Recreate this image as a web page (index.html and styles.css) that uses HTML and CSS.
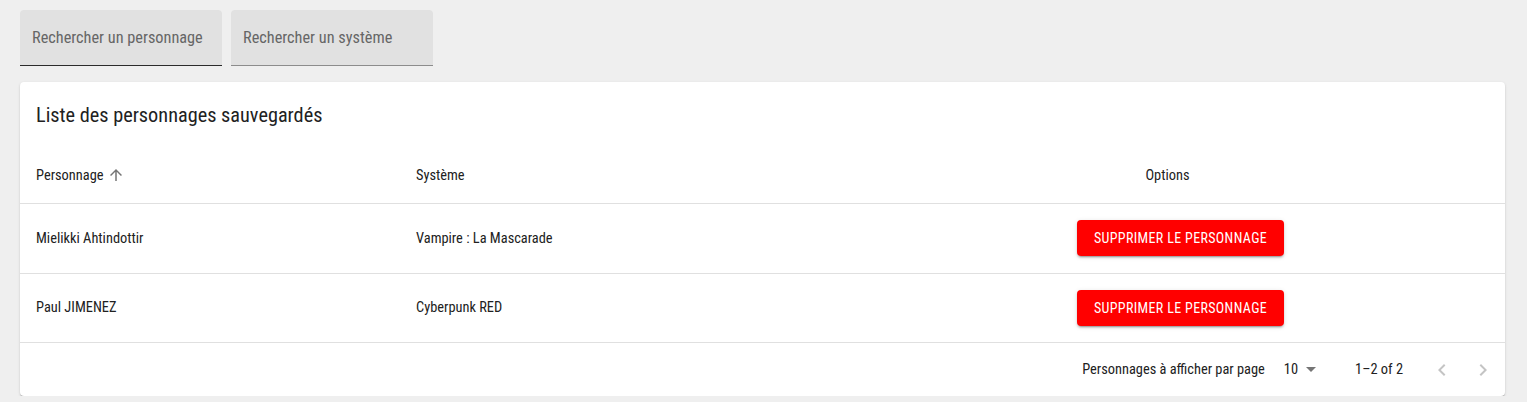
FILE: index.html
```html
<!DOCTYPE html>
<html lang="fr">
<head>
<meta charset="utf-8">
<title>Personnages</title>
<link rel="stylesheet" href="styles.css">
</head>
<body>
  <div class="search-bar">
    <div class="field field-active"><span class="placeholder">Rechercher un personnage</span></div>
    <div class="field"><span class="placeholder">Rechercher un système</span></div>
  </div>

  <div class="card">
    <div class="card-title">Liste des personnages sauvegardés</div>
    <div class="table">
      <div class="row header">
        <div class="cell">Personnage
          <svg class="sort" width="18" height="18" viewBox="0 0 24 24"><path d="M4 12l1.41 1.41L11 7.83V20h2V7.83l5.58 5.59L20 12l-8-8-8 8z" fill="#757575"/></svg>
        </div>
        <div class="cell">Système</div>
        <div class="cell center">Options</div>
      </div>
      <div class="row">
        <div class="cell">Mielikki Ahtindottir</div>
        <div class="cell">Vampire : La Mascarade</div>
        <div class="cell action"><button class="btn-danger">Supprimer le personnage</button></div>
      </div>
      <div class="row">
        <div class="cell">Paul JIMENEZ</div>
        <div class="cell">Cyberpunk RED</div>
        <div class="cell action"><button class="btn-danger">Supprimer le personnage</button></div>
      </div>
    </div>
    <div class="paginator">
      <span class="pg-label">Personnages à afficher par page</span>
      <span class="pg-select">10
        <svg width="10" height="5" viewBox="0 0 10 5"><path d="M0 0l5 5 5-5z" fill="#757575"/></svg>
      </span>
      <span class="pg-range">1–2 of 2</span>
      <span class="pg-nav">
        <svg width="24" height="24" viewBox="0 0 24 24"><path d="M15.41 7.41L14 6l-6 6 6 6 1.41-1.41L10.83 12z" fill="#c4c4c4"/></svg>
        <svg width="24" height="24" viewBox="0 0 24 24"><path d="M10 6L8.59 7.41 13.17 12l-4.58 4.59L10 18l6-6z" fill="#c4c4c4"/></svg>
      </span>
    </div>
  </div>
</body>
</html>
```

FILE: styles.css
```css
* { box-sizing: border-box; }
body {
  margin: 0;
  padding: 10px 22px 0 20px;
  background: #efefef;
  font-family: "Roboto Condensed", Roboto, "Liberation Sans", sans-serif;
  font-stretch: 87.5%;
  color: #212121;
}
.search-bar {
  display: flex;
  gap: 9px;
}
.field {
  width: 202px;
  height: 56px;
  background: #e1e1e1;
  border-radius: 4px 4px 0 0;
  border-bottom: 1px solid #8c8c8c;
  display: flex;
  align-items: center;
  padding: 0 12px;
}
.field-active { border-bottom-color: #2b2b2b; }
.placeholder {
  font-size: 16.3px;
  color: #666;
}
.card {
  margin-top: 16px;
  background: #fff;
  border-radius: 4px;
  box-shadow: 0 2px 1px -1px rgba(0,0,0,.2), 0 1px 1px 0 rgba(0,0,0,.14), 0 1px 3px 0 rgba(0,0,0,.12);
  padding-top: 17px;
}
.card-title {
  font-size: 20.3px;
  line-height: 32px;
  padding: 0 16px;
  margin-bottom: 16px;
  color: #212121;
}
.row {
  display: grid;
  grid-template-columns: 380px 430px 1fr;
  border-bottom: 1px solid #e0e0e0;
  min-height: 69.5px;
  align-items: center;
  padding: 0 16px;
  font-size: 14.4px;
}
.row.header {
  min-height: 57px;
}
.cell { display: flex; align-items: center; }
.cell.center { justify-content: center; }
.cell.action { justify-content: center; padding-left: 26px; }
.sort { margin-left: 4px; }
.btn-danger {
  background: #ff0000;
  color: #fff;
  border: none;
  border-radius: 4px;
  height: 36px;
  padding: 0 17px;
  font-family: inherit;
  font-stretch: 87.5%;
  font-size: 14px;
  font-weight: 400;
  letter-spacing: .35px;
  text-transform: uppercase;
  box-shadow: 0 3px 1px -2px rgba(0,0,0,.2), 0 2px 2px 0 rgba(0,0,0,.14), 0 1px 5px 0 rgba(0,0,0,.12);
}
.paginator {
  display: flex;
  justify-content: flex-end;
  align-items: center;
  height: 53px;
  padding-right: 10px;
  font-size: 14.4px;
}
.pg-select {
  margin-left: 19px;
  display: flex;
  align-items: center;
  gap: 8px;
}
.pg-range { margin-left: 39px; }
.pg-nav {
  margin-left: 27px;
  display: flex;
  gap: 17px;
}
```
